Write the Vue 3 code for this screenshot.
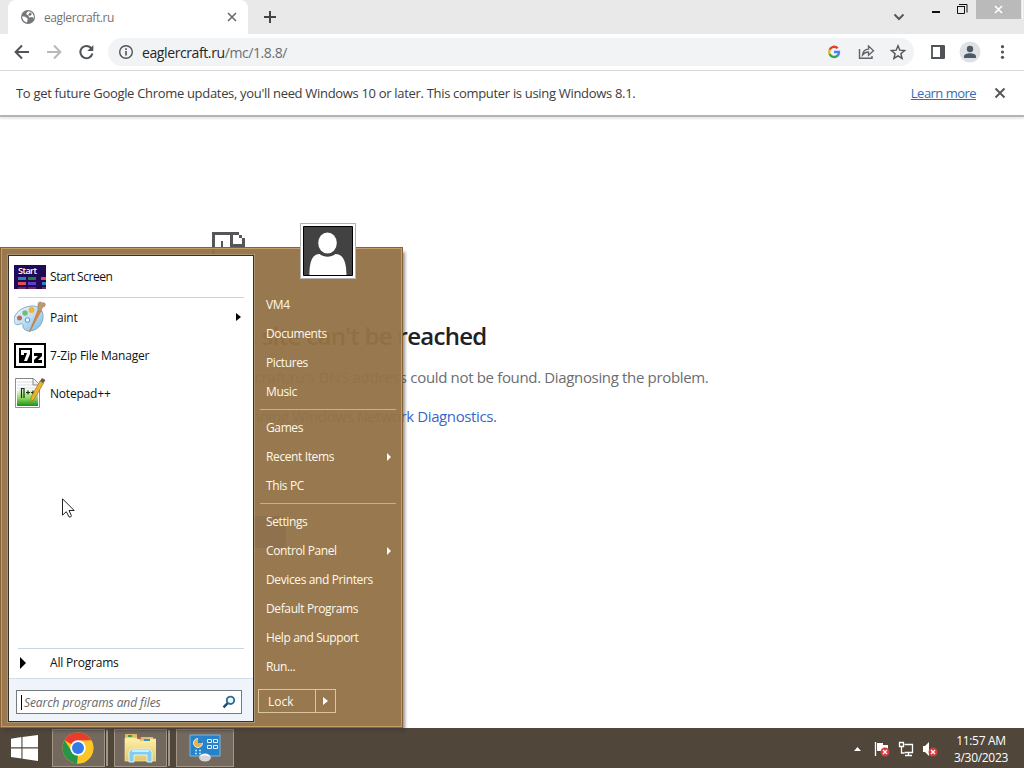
<template>
    <div class="desktop">
        <div class="tabstrip">
            <div class="tab">
                <svg class="globe" width="16" height="16" viewBox="0 0 16 16">
                    <circle cx="8" cy="8" r="7" fill="#74777b" />
                    <path d="M8 2.2 6 5l2 1.2 1.4 2.2 2.8-.4 1.6 1.4A6 6 0 0 0 8 2.2zM2.2 7.3l3 .5 2.6 2-.8 3.7A5.8 5.8 0 0 1 2.2 7.3z" fill="#fff" />
                    <path d="m8 6 2-2.8L12 5l-2 2z" fill="#74777b" />
                </svg>
                <span class="tab-title">eaglercraft.ru</span>
                <svg width="10" height="10" viewBox="0 0 10 10"><path d="m1 1 8 8m0-8L1 9" stroke="#66696c" stroke-width="1.600" /></svg>
            </div>
            <svg class="plus" width="12" height="12" viewBox="0 0 12 12"><path d="M6 0v12M0 6h12" stroke="#444" stroke-width="2" /></svg>
            <div class="window-buttons">
                <svg width="131" height="24" viewBox="0 0 131 24">
                    <path d="m1.500 14.500 4.500 4.500 4.500-4.500" fill="none" stroke="#56595c" stroke-width="2" />
                    <path d="M39 12h8" stroke="#111" stroke-width="2" />
                    <path d="M64.500 6.500h7v7h-7z" fill="none" stroke="#111" />
                    <path d="M64 6.500h8M66 4.500h8v8" fill="none" stroke="#111" />
                    <path d="M83 0h45v19H83z" fill="#bababa" />
                    <path d="m102 6 7 7m0-7-7 7" stroke="#fff" stroke-width="1.700" />
                    <path d="M129 0h1v19h-1z" fill="#f8f8f8" />
                </svg>
            </div>
        </div>
        <div class="toolbar">
            <svg class="nav" width="82" height="20" viewBox="0 0 82 20">
                <path d="M15 10H2M8 3.500 1.600 10 8 16.500" fill="none" stroke="#505357" stroke-width="2" />
                <path d="M33 10h13M40 3.500l6.400 6.500-6.400 6.500" fill="none" stroke="#b7b9bb" stroke-width="2" />
                <path d="M77 6a6.100 6.100 0 1 0 1.400 5.500" fill="none" stroke="#505357" stroke-width="2" />
                <path d="M79.300 3v6h-6z" fill="#505357" />
            </svg>
            <div class="omnibox">
                <svg width="16" height="16" viewBox="0 0 16 16">
                    <circle cx="8" cy="8" r="6.300" fill="none" stroke="#505357" stroke-width="1.400" />
                    <path d="M8 7v4.500M8 4.300v1.700" stroke="#505357" stroke-width="1.600" />
                </svg>
                <span class="url"><b>eaglercraft.ru</b>/mc/1.8.8/</span>
                <svg class="omni-icons" width="80" height="20" viewBox="0 0 80 20">
                    <g fill="none" stroke-width="2.300">
                        <path d="M10.700 6.200A5 5 0 0 0 2.600 7.800" stroke="#e34133" />
                        <path d="M2.700 7.600a5 5 0 0 0 0 4.600" stroke="#f3b50b" />
                        <path d="M2.600 12a5 5 0 0 0 7.900 1.700" stroke="#34a353" />
                        <path d="M10.400 13.800A5 5 0 0 0 12 10H7" stroke="#4285f4" />
                    </g>
                    <path d="M32.500 7v9.300H45V14" fill="none" stroke="#5f6368" stroke-width="1.400" />
                    <path d="M35.500 13c.4-4 2.600-5.700 6-5.800V4l5 4.700-5 4.600V10c-2.600 0-4.400.8-6 3z" fill="none" stroke="#5f6368" stroke-width="1.300" />
                    <path d="m71 3.800 1.800 4.400 4.800.4-3.700 3.100 1.200 4.700-4.100-2.500-4.100 2.500 1.200-4.700-3.700-3.100 4.800-.4z" fill="none" stroke="#505357" stroke-width="1.400" />
                </svg>
            </div>
            <svg width="94" height="24" viewBox="0 0 94 24">
                <path d="M3 6h11.500v12H3z" fill="none" stroke="#505357" stroke-width="1.800" />
                <path d="M11 5.500h5v13h-5z" fill="#505357" />
                <circle cx="41" cy="12" r="10.500" fill="#dfe1e5" />
                <circle cx="41" cy="9" r="3.200" fill="#4d5966" />
                <path d="M35 18v-1.500c0-2.200 3-3.300 6-3.300s6 1.100 6 3.300V18z" fill="#4d5966" />
                <g fill="#505357"><circle cx="73.500" cy="6.700" r="1.600" /><circle cx="73.500" cy="12" r="1.600" /><circle cx="73.500" cy="17.300" r="1.600" /></g>
            </svg>
        </div>
        <div class="infobar">
            <span class="notice">To get future Google Chrome updates, you'll need Windows 10 or later. This computer is using Windows 8.1.</span>
            <a class="learn">Learn more</a>
            <svg width="12" height="12" viewBox="0 0 12 12"><path d="m1.500 1.500 9 9m0-9-9 9" stroke="#505357" stroke-width="1.800" /></svg>
        </div>
        <div class="page">
            <svg class="sad" width="36" height="40" viewBox="0 0 36 40">
                <path d="M0 0h27v3H3v37H0zM18 3h3v9h12v3H18zM9 9h2v6H9zM27 3h3v3h-3zM30 6h3v9h-3z" fill="#55565a" />
            </svg>
            <h1>This site can't be reached</h1>
            <p class="dns"><span>eaglercraft.ru's DNS address</span> could not be found. Diagnosing the problem.</p>
            <p class="diag">Try running Windows Network Diagnostics.</p>
            <div class="reload"></div>
        </div>

        <div class="start-menu">
            <div class="programs">
                <div class="row first">
                    <svg width="32" height="24" viewBox="0 0 32 24">
                        <path d="M0 0h32v24H0z" fill="#210956" />
                        <text x="4" y="9" class="start-label" textLength="19">Start</text>
                        <path d="M4 12h8v3H4zM28 17h4v3h-4z" fill="#2685bd" />
                        <path d="M14 12h8v3h-8z" fill="#168338" />
                        <path d="M27 12h5v3h-5zM4 17h8v3H4z" fill="#e14d58" />
                        <path d="M14 17h8v3h-8z" fill="#663bc4" />
                        <path d="M4 22h8v2H4zM14 22h8v2h-8zM28 22h4v2h-4z" fill="#6b2858" />
                    </svg>
                    <span>Start Screen</span>
                </div>
                <div class="row">
                    <svg width="32" height="32" viewBox="0 0 32 32">
                        <defs>
                            <linearGradient id="pal" x2="1" y2="1"><stop stop-color="#f3fbff" /><stop offset=".55" stop-color="#b9dcf3" /><stop offset="1" stop-color="#74b5df" /></linearGradient>
                        </defs>
                        <path d="M17 5C25 4 30 10 29 17c-1 8-7 13-14 13-3 0-6-2-6-5 0-2-1-3-3-2-3 2-6 0-6-4C0 12 8 6 17 5z" fill="url(#pal)" stroke="#86a9c1" />
                        <circle cx="5.500" cy="17" r="2.500" fill="#bd6763" />
                        <circle cx="11" cy="12" r="2.700" fill="#78b975" />
                        <circle cx="17.500" cy="9" r="3" fill="#eeb53b" />
                        <circle cx="13.500" cy="19" r="2.300" fill="#eaf7ff" stroke="#5792c9" />
                        <path d="M15.500 31 24 9l3 1z" fill="#dd883f" stroke="#b96d32" stroke-width=".6" />
                        <path d="m24 10 3 1 1-4 3-2c1-3-1-4-3-3-1-2-4-1-4 1z" fill="#bc9a75" stroke="#a48162" stroke-width=".6" />
                    </svg>
                    <span>Paint</span>
                    <svg class="more" width="5" height="8" viewBox="0 0 5 8"><path d="M0 0v8l5-4z" /></svg>
                </div>
                <div class="row">
                    <svg width="32" height="25" viewBox="0 0 32 25">
                        <path d="M0 0h32v25H0z" /><path d="M2 2h28v21H2z" fill="#fff" /><path d="M5 5h13v15H5z" />
                        <path d="M7 7h9v4l-3 7h-3l3-8h-3v2H7z" fill="#fff" />
                        <path d="M20 10h8v3l-4 4h4v3h-8v-3l4-4h-4z" />
                    </svg>
                    <span>7-Zip File Manager</span>
                </div>
                <div class="row">
                    <svg width="32" height="32" viewBox="0 0 32 32">
                        <defs><linearGradient id="npp" x2="0" y2="1"><stop offset="0" stop-color="#f6fff0" /><stop offset=".5" stop-color="#9ada68" /><stop offset="1" stop-color="#149410" /></linearGradient></defs>
                        <path d="M1.500 1.500h18l6 6v23h-24z" fill="#fff" stroke="#8c938c" />
                        <path d="M3 12h21v17H3z" fill="url(#npp)" />
                        <path d="M3 5h16M3 8h18M3 11h20" stroke="#cbd6df" stroke-width=".8" />
                        <path d="M2 1.500h17" stroke="#777" stroke-dasharray="1 1" />
                        <path d="M19 2v6h6" fill="#eee" stroke="#888" />
                        <path d="M7.500 21v-9.500h2.500V21M12 15.500h4M14 13.500v4M17 15.500h4M19 13.500v4" fill="none" stroke="#183015" stroke-width="1.200" />
                        <path d="m16.500 25 .7-5L26 4l3.500 2-9 16z" fill="#e9b52b" stroke="#98742b" stroke-width=".7" />
                        <path d="m26 4 2-3 3.500 2-2 3z" fill="#665955" />
                    </svg>
                    <span>Notepad++</span>
                </div>
                <div class="all">
                    <svg width="6" height="12" viewBox="0 0 6 12"><path d="M0 0v12l6-6z" /></svg>
                    <span>All Programs</span>
                </div>
                <div class="search">
                    <div class="search-box">
                        <span class="caret"></span>
                        <i>Search programs and files</i>
                        <svg width="14" height="14" viewBox="0 0 14 14">
                            <circle cx="8.500" cy="5.300" r="3.700" fill="#eef8fc" stroke="#2b6d97" stroke-width="1.900" />
                            <path d="m1.500 12.300 4.200-4.200" stroke="#214c6b" stroke-width="2.500" />
                        </svg>
                    </div>
                </div>
            </div>
            <div class="places">
                <div class="avatar">
                    <svg width="50" height="50" viewBox="0 0 50 50">
                        <path d="M.5.5h49v49H.500z" fill="#424242" stroke="#000" />
                        <ellipse cx="24.500" cy="17" rx="9.300" ry="10.500" fill="#fff" />
                        <path d="M6.500 49c0-10 1.500-21 10-21 5 3.500 11 3.500 16 0 9 0 11 11 11 21z" fill="#fff" />
                    </svg>
                </div>
                <div v-for="(group, i) in places" :key="i" class="group">
                    <div v-for="item in group" :key="item.name" class="place">
                        {{ item.name }}
                        <svg v-if="item.more" width="4" height="8" viewBox="0 0 4 8"><path d="M0 0v8l4-4z" fill="#fff" /></svg>
                    </div>
                </div>
                <div class="lock">
                    <span>Lock</span>
                    <em><svg width="5" height="8" viewBox="0 0 5 8"><path d="M0 0v8l5-4z" fill="#fff" /></svg></em>
                </div>
            </div>
        </div>

        <svg class="cursor" width="13" height="20" viewBox="0 0 13 20">
            <path d="M.5.8v16.400l3.800-3.500 2.700 5.200c1.500.6 2.700-.4 2.300-1.400L7 12.500h5.200z" fill="#fff" stroke="#222" />
        </svg>

        <div class="taskbar">
            <svg class="winlogo" width="27" height="26" viewBox="0 0 27 26">
                <path d="m0 3.800 10.400-1.700v10.200H0zM11.500 1.900 27 0v12.300H11.500zM0 13.400h10.400v10.200L0 22zM11.500 13.400H27V26l-15.500-2.200z" fill="#fff" />
            </svg>
            <div class="task stack">
                <svg width="32" height="32" viewBox="0 0 32 32">
                    <circle cx="16" cy="16" r="15.500" fill="#fcc629" />
                    <path d="M16 16 2.600 8.200A15.500 15.500 0 0 1 29.400 8.200L16 8.700z" fill="#ea3b2e" />
                    <path d="M2.600 8.200 9.700 19.600 16 23.300 15 31.500A15.500 15.500 0 0 1 2.600 8.200z" fill="#269548" />
                    <path d="M16 8.700h13.400A15.500 15.500 0 0 1 15 31.500l7.300-11.800z" fill="#fcc629" />
                    <circle cx="16" cy="16" r="7.700" fill="#fff" />
                    <circle cx="16" cy="16" r="6" fill="#327be8" />
                </svg>
            </div>
            <div class="task stack">
                <svg width="32" height="30" viewBox="0 0 32 30">
                    <defs><linearGradient id="fold" x2="0" y2="1"><stop stop-color="#fff1a9" /><stop offset="1" stop-color="#e5c567" /></linearGradient></defs>
                    <path d="M1 5V1h12v3h16v24H1z" fill="#d9bd68" />
                    <path d="M1 5h13l2 3h6l2-2h8v22H1z" fill="url(#fold)" stroke="#f7e79b" stroke-width=".7" />
                    <path d="M4 2h4v2H4z" fill="#3d9b49" /><path d="M13 4h4v2h-4z" fill="#d6534c" /><path d="M20 6h6v2h-6z" fill="#3c8ec8" />
                    <path d="M5 29V19l3-3h17l3 3v10h-5v-7H10v7z" fill="#84cce9" stroke="#d6f5fc" />
                    <path d="M8 18h17" stroke="#e3faff" stroke-width="1.500" />
                </svg>
            </div>
            <div class="task">
                <svg width="32" height="28" viewBox="0 0 32 28">
                    <path d="M1 1h30v21H1z" fill="#2582cb" stroke="#75b9e4" />
                    <circle cx="9" cy="9" r="4.500" fill="#e9b344" stroke="#d9eefb" />
                    <path d="M9 9V4a5 5 0 0 1 5 5z" fill="#287ec0" />
                    <path d="M18.500 5.500h4v3h-4zM24.500 5.500h4v3h-4zM18.500 11.500h4v3h-4zM24.500 11.500h4v3h-4z" fill="#2c78b8" stroke="#e0f3ff" />
                    <path d="M6 16.500h2m2 0h2m-6 3h2m2 0h2" stroke="#ace5ff" stroke-width="1.500" />
                    <ellipse cx="16" cy="23.500" rx="6" ry="4" fill="#d4d6d8" /><path d="M12 22q4-3 8 0" fill="none" stroke="#fff" stroke-width="1.500" />
                </svg>
            </div>
            <svg class="tray" width="84" height="18" viewBox="0 0 84 18">
                <path d="M0 11h7L3.500 7z" fill="#fff" />
                <path d="M21.500 2v14" stroke="#fff" stroke-width="1.300" />
                <path d="M23 3h6v2h5v6H23z" fill="#fff" />
                <path d="M50.500 4.500h8v8h-8M54.500 13v3M51 15.500h7" fill="none" stroke="#fff" stroke-width="1.300" />
                <path d="M45.500 2.500h4v4h-4zM47.500 7v6h3" fill="none" stroke="#fff" stroke-width="1.300" />
                <path d="M69 6h2l4-4v14l-4-4h-2z" fill="#fff" />
                <circle cx="31" cy="12" r="4.500" fill="#d33b40" /><path d="m29 10 4 4m0-4-4 4" stroke="#fff" stroke-width="1.300" />
                <circle cx="79" cy="12" r="4.500" fill="#d33b40" /><path d="m77 10 4 4m0-4-4 4" stroke="#fff" stroke-width="1.300" />
            </svg>
            <div class="clock">
                <div>11:57 AM</div>
                <div>3/30/2023</div>
            </div>
        </div>
    </div>
</template>

<script setup>
const places = [
    [{ name: "VM4" }, { name: "Documents" }, { name: "Pictures" }, { name: "Music" }],
    [{ name: "Games" }, { name: "Recent Items", more: true }, { name: "This PC" }],
    [
        { name: "Settings" },
        { name: "Control Panel", more: true },
        { name: "Devices and Printers" },
        { name: "Default Programs" },
        { name: "Help and Support" },
        { name: "Run..." },
    ],
];
</script>

<style>
body {
    margin: 0;
    overflow: hidden;
}
</style>

<style scoped>
* {
    box-sizing: border-box;
}
svg {
    display: block;
    flex: none;
}
.desktop {
    position: relative;
    width: 1024px;
    height: 768px;
    display: flex;
    flex-direction: column;
    background: #fff;
    font-family: "Open Sans", "Noto Sans", sans-serif;
    font-size: 12px;
    white-space: nowrap;
}
.tabstrip {
    height: 34px;
    display: flex;
    background: #e9e9e9;
    padding-left: 8px;
}
.tab {
    width: 240px;
    display: flex;
    align-items: center;
    padding: 0 11px 0 12px;
    background: #fff;
    border-radius: 8px 8px 0 0;
}
.tab-title {
    flex: 1;
    margin-left: 8px;
    color: #747474;
    letter-spacing: -0.4px;
}
.plus {
    margin: 11px 0 0 16px;
}
.window-buttons {
    margin-left: auto;
}
.toolbar {
    height: 37px;
    display: flex;
    align-items: center;
    padding-left: 14px;
    border-bottom: 1px solid #d9d9d9;
}
.omnibox {
    width: 806px;
    height: 28px;
    margin: 0 15px 0 12px;
    padding: 0 7px 0 10px;
    display: flex;
    align-items: center;
    border-radius: 14px;
    background: #f1f3f4;
}
.url {
    flex: 1;
    margin-left: 8px;
    font-size: 14px;
    color: #6b6e72;
    letter-spacing: -0.4px;
}
.url b {
    font-weight: 400;
    color: #25272a;
}
.infobar {
    height: 46px;
    display: flex;
    align-items: center;
    padding: 0 18px 1px 16px;
    border-bottom: 2px solid #b4b4b4;
    box-shadow: 0 2px 2px #e8e8e8;
    font-size: 13px;
    color: #3c3c3c;
}
.notice {
    flex: 1;
    letter-spacing: -0.315px;
}
.learn {
    margin-right: 18px;
    color: #356bb8;
    text-decoration: underline;
    letter-spacing: -0.53px;
}
.page {
    flex: 1;
    min-height: 0;
    padding: 115px 0 0 212px;
    color: #6b6d70;
    font-size: 15px;
}
h1 {
    margin: 47px 0 0;
    font-size: 24px;
    line-height: 34px;
    font-weight: 600;
    color: #202124;
    letter-spacing: -0.71px;
}
p {
    margin: 13px 0 0;
    line-height: 22px;
}
.dns {
    letter-spacing: -0.34px;
}
.dns span {
    letter-spacing: -0.14px;
}
.diag {
    margin-top: 17px;
    color: #3767c8;
    letter-spacing: -0.38px;
}
.reload {
    width: 74px;
    height: 32px;
    margin-top: 89px;
    border-radius: 4px;
    background: #1a73e8;
}
.start-menu {
    position: absolute;
    left: 0;
    top: 247px;
    width: 403px;
    height: 481px;
    display: flex;
    padding: 7px 5px 5px 7px;
    background: rgba(148, 115, 71, 0.96);
    border: 1px solid #8a6234;
    box-shadow: inset 0 0 0 1px #c59c6c, 3px 4px 3px -1px rgba(60, 55, 55, 0.55);
}
.programs {
    width: 246px;
    height: 467px;
    display: flex;
    flex-direction: column;
    padding-top: 3px;
    border: 1px solid #37302a;
    box-shadow: 0 0 0 1px #aa9371;
    background: #fff;
    color: #111;
}
.row {
    height: 38px;
    display: flex;
    align-items: center;
    margin: 0 9px 0 5px;
}
.row span {
    margin-left: 4px;
    letter-spacing: -0.2px;
}
.row.first {
    height: 39px;
    position: relative;
    padding-bottom: 4px;
}
.row.first::after {
    content: "";
    position: absolute;
    left: 4px;
    right: 0;
    bottom: 0;
    height: 1px;
    background: #cbd5de;
}
.row.first span {
    letter-spacing: -0.45px;
}
.start-label {
    fill: #fff;
    font-size: 9px;
    font-weight: 600;
}
.more {
    margin-left: auto;
    margin-right: 3px;
}
.all {
    height: 30px;
    display: flex;
    align-items: center;
    margin: auto 9px 0;
    padding: 0 2px 2px;
    border-top: 1px solid #cbd5de;
}
.all span {
    margin-left: 24px;
    letter-spacing: -0.2px;
}
.search {
    height: 43px;
    padding: 11px 0 0 7px;
    background: #eff3fa;
    border-top: 1px solid #d5dde8;
}
.search-box {
    width: 226px;
    height: 24px;
    display: flex;
    align-items: center;
    padding: 0 5px 0 4px;
    border: 1px solid #747a80;
    background: #fff;
    color: #686868;
}
.search-box i {
    flex: 1;
    margin-left: 2px;
    letter-spacing: -0.08px;
}
.caret {
    width: 1px;
    height: 15px;
    background: #000;
}
.places {
    position: relative;
    width: 136px;
    margin-left: 6px;
    padding-top: 35px;
    color: #fff8ec;
}
.avatar {
    position: absolute;
    left: 40px;
    top: -32px;
    padding: 2px;
    border: 1px solid #b3b3b3;
    background: #fff;
}
.group + .group {
    border-top: 1px solid #cdb07f;
    margin-top: 3px;
    padding-top: 3px;
}
.place {
    height: 29px;
    display: flex;
    align-items: center;
    justify-content: space-between;
    padding: 0 5px 0 6px;
    letter-spacing: -0.38px;
}
.lock {
    width: 78px;
    height: 24px;
    margin: 8px 0 0 -2px;
    display: flex;
    align-items: center;
    border: 1px solid #ddc59e;
}
.lock span {
    flex: 1;
    padding-left: 9px;
}
.lock em {
    width: 20px;
    height: 22px;
    display: flex;
    align-items: center;
    justify-content: center;
    border-left: 1px solid #ddc59e;
}
.cursor {
    position: absolute;
    left: 62px;
    top: 498px;
}
.taskbar {
    height: 40px;
    display: flex;
    align-items: center;
    padding-left: 11px;
    background: #51463a;
}
.winlogo {
    margin-right: 14px;
}
.task {
    width: 58px;
    height: 38px;
    display: flex;
    align-items: center;
    justify-content: center;
    background: #74695e;
    border: 1px solid #a19687;
}
.task.stack {
    width: 53px;
    margin-right: 9px;
    box-shadow: 2px 0 0 -1px #40372f, 4px 0 0 -1px #a19687;
}
.task.stack svg {
    margin-right: 2px;
}
.tray {
    margin: 1px 2px 0 auto;
}
.clock {
    width: 84px;
    padding: 2px 2px 0 0;
    line-height: 17px;
    text-align: center;
    color: #fff;
    letter-spacing: -0.3px;
}
</style>
